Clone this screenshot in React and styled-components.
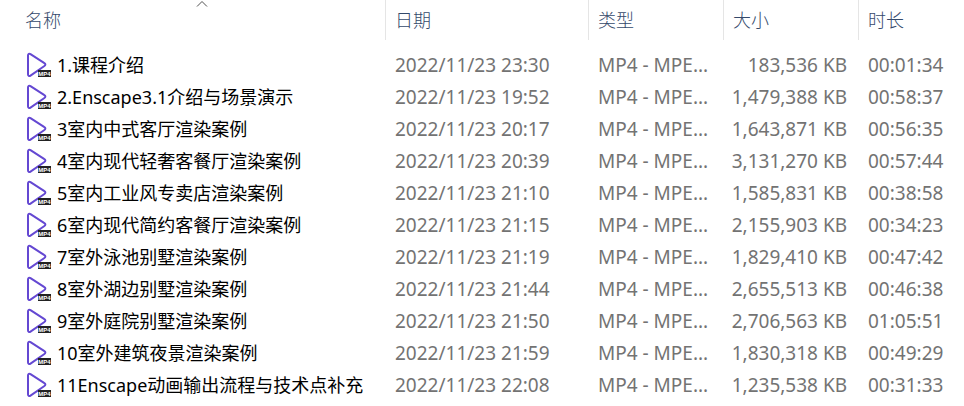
import React from "react";
import styled, { createGlobalStyle } from "styled-components";

const files = [
  { name: "1.课程介绍", date: "2022/11/23 23:30", size: "183,536 KB", length: "00:01:34" },
  { name: "2.Enscape3.1介绍与场景演示", date: "2022/11/23 19:52", size: "1,479,388 KB", length: "00:58:37" },
  { name: "3室内中式客厅渲染案例", date: "2022/11/23 20:17", size: "1,643,871 KB", length: "00:56:35" },
  { name: "4室内现代轻奢客餐厅渲染案例", date: "2022/11/23 20:39", size: "3,131,270 KB", length: "00:57:44" },
  { name: "5室内工业风专卖店渲染案例", date: "2022/11/23 21:10", size: "1,585,831 KB", length: "00:38:58" },
  { name: "6室内现代简约客餐厅渲染案例", date: "2022/11/23 21:15", size: "2,155,903 KB", length: "00:34:23" },
  { name: "7室外泳池别墅渲染案例", date: "2022/11/23 21:19", size: "1,829,410 KB", length: "00:47:42" },
  { name: "8室外湖边别墅渲染案例", date: "2022/11/23 21:44", size: "2,655,513 KB", length: "00:46:38" },
  { name: "9室外庭院别墅渲染案例", date: "2022/11/23 21:50", size: "2,706,563 KB", length: "01:05:51" },
  { name: "10室外建筑夜景渲染案例", date: "2022/11/23 21:59", size: "1,830,318 KB", length: "00:49:29" },
  { name: "11Enscape动画输出流程与技术点补充", date: "2022/11/23 22:08", size: "1,235,538 KB", length: "00:31:33" },
];

const VideoIcon = () => (
  <Icon viewBox="0 0 26 26" aria-hidden="true">
    <path
      d="M3 3.4C3 1.8 4.2 1.3 5.5 2.1L19.4 11.2C20.7 12 20.7 13.2 19.4 14L5.5 23.6C4.2 24.4 3 23.8 3 22.2Z"
      fill="#fff"
      stroke="#6448d2"
      strokeWidth="2"
    />
    <rect x="13" y="18" width="13" height="7" fill="#222" />
    <text x="19.5" y="23.7" textAnchor="middle">MP4</text>
  </Icon>
);

export default function App() {
  return (
    <>
      <GlobalStyle />
      <FileTable>
        <colgroup>
          <col />
          <Col $width={203} />
          <Col $width={135} />
          <Col $width={135} />
          <Col $width={106} />
        </colgroup>
        <thead>
          <tr>
            <NameHeader aria-sort="ascending">
              名称
              <SortArrow viewBox="0 0 12 7" aria-hidden="true">
                <path d="M1 6.5L6 1.5L11 6.5" />
              </SortArrow>
            </NameHeader>
            <Header>日期</Header>
            <Header>类型</Header>
            <Header>大小</Header>
            <Header>时长</Header>
          </tr>
        </thead>
        <tbody>
          {files.map((file) => (
            <tr key={file.name}>
              <NameCell>
                <FileName>
                  <VideoIcon />
                  {file.name}
                </FileName>
              </NameCell>
              <Cell>{file.date}</Cell>
              <Cell>MP4 - MPE...</Cell>
              <SizeCell>{file.size}</SizeCell>
              <Cell>{file.length}</Cell>
            </tr>
          ))}
        </tbody>
      </FileTable>
    </>
  );
}

const GlobalStyle = createGlobalStyle`
  body {
    margin: 0;
    background: #fff;
    font-family: "Noto Sans", "Noto Sans CJK SC", sans-serif;
    font-size: 18px;
  }
`;

const FileTable = styled.table`
  width: 100%;
  table-layout: fixed;
  border-collapse: separate;
  border-spacing: 0;
  white-space: nowrap;

  thead::after {
    content: "";
    display: block;
    height: 9px;
  }
`;

const Col = styled.col`
  width: ${({ $width }) => $width}px;
`;

const Header = styled.th`
  box-sizing: border-box;
  height: 40px;
  padding: 0 0 0 9px;
  color: #34496b;
  font-weight: 300;
  line-height: 24px;
  text-align: left;
  border-left: 1px solid #e5e5e5;
`;

const NameHeader = styled(Header)`
  position: relative;
  padding-left: 25px;
  border-left: none;
`;

const SortArrow = styled.svg`
  position: absolute;
  top: 0;
  left: calc(50% + 3px);
  width: 12px;
  height: 7px;
  fill: none;
  stroke: #505050;
`;

const Cell = styled.td`
  box-sizing: border-box;
  height: 32px;
  padding: 0 0 0 10px;
  color: #737373;
  font-size: 19px;
  line-height: 32px;
`;

const SizeCell = styled(Cell)`
  padding: 0 11px 0 0;
  text-align: right;
`;

const NameCell = styled(Cell)`
  padding-left: 25px;
  color: #000;
  font-size: 18px;
`;

const FileName = styled.div`
  display: flex;
  align-items: center;
  gap: 6px;
  height: 32px;
`;

const Icon = styled.svg`
  flex: none;
  width: 26px;
  height: 26px;

  text {
    fill: #fff;
    font: bold 6px "Liberation Sans", sans-serif;
  }
`;
